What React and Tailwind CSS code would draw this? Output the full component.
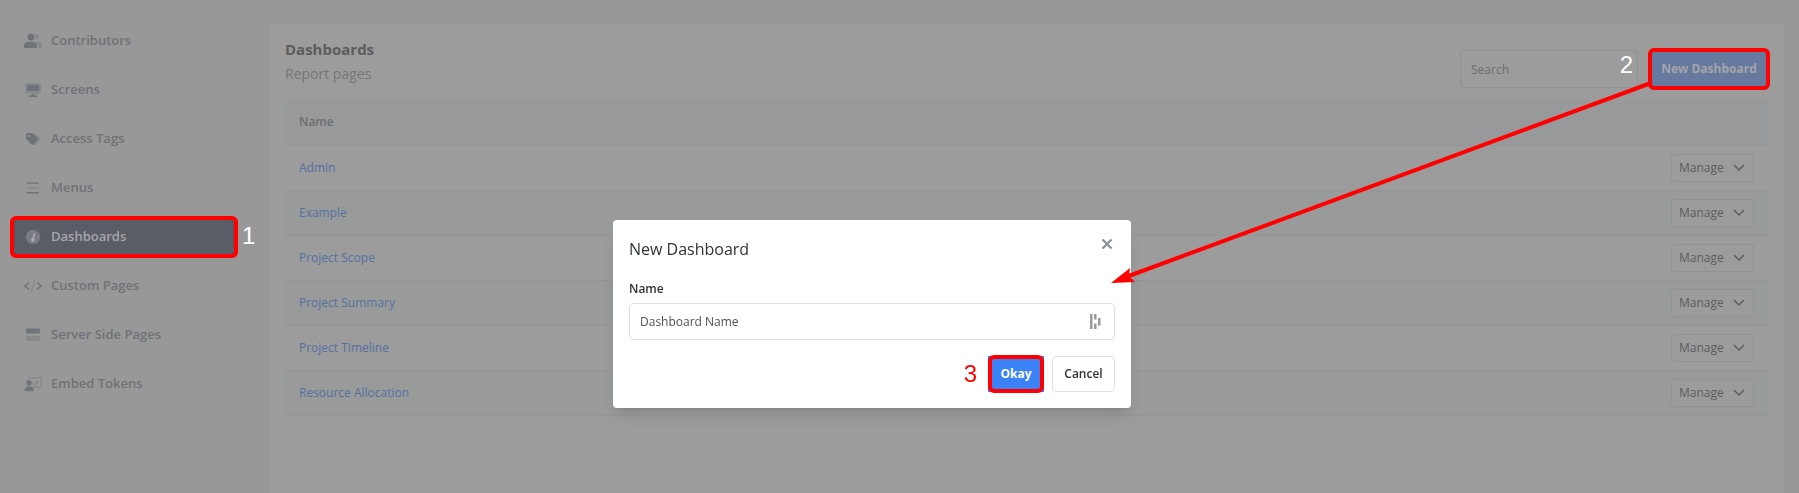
import React, { useState } from 'react'

const dashboards = ['Admin', 'Example', 'Project Scope', 'Project Summary', 'Project Timeline', 'Resource Allocation']

const icons = {
  contributors: (
    <>
      <g opacity="0.4">
        <path d="M11 1a3 3 0 0 1 2.5 0a3 3 0 0 1 -1 5.500a3 3 0 0 1 -1.500 -.2a4.500 4.500 0 0 0 0 -5.300z" />
        <path d="M13 8.500h1a4 4 0 0 1 4 4v1.500q0 1 -1 1h-3.300q.3 -.5 .3 -1.500a6 6 0 0 0 -2 -4.700z" />
      </g>
      <circle cx="7" cy="4" r="3.500" />
      <path d="M4 8.800h5a4 4 0 0 1 4 4v1.200q0 1 -1 1h-11q-1 0 -1 -1v-1.200a4 4 0 0 1 4 -4z" />
    </>
  ),
  screens: (
    <>
      <path opacity="0.4" fillRule="evenodd" d="M2.500 1h13a1.500 1.500 0 0 1 1.500 1.500v8a1.500 1.500 0 0 1 -1.500 1.500h-13a1.500 1.500 0 0 1 -1.500 -1.500v-8a1.500 1.500 0 0 1 1.500 -1.500zM3 3v6h12v-6z" />
      <path d="M3 3h12v6h-12zM8 12h2l.5 1.200h2q1 0 1 .9t-1 .9h-7q-1 0 -1 -.9t1 -.9h2z" />
    </>
  ),
  tags: (
    <>
      <path opacity="0.4" d="M10 2h1l5 5.200q1 1.200 0 2.300l-4.500 4.500q-.6 .4 -1.200 0l4.500 -4.700q.6 -.7 0 -1.400z" />
      <path fillRule="evenodd" d="M2 3.200q0 -1.200 1.200 -1.200h4.600q.7 0 1.200 .5l4.700 4.700q1 1.100 0 2.200l-4 4q-1.100 1 -2.200 0l-5 -4.800q-.5 -.5 -.5 -1.200zM5 4a1 1 0 1 0 0.010 0z" />
    </>
  ),
  menus: (
    <>
      <path d="M3 2.500h12v1.200h-12zM3 12h12v1.500h-12z" />
      <path opacity="0.4" d="M3 7.200h12v1.600h-12z" />
    </>
  ),
  dashboards: (
    <>
      <circle opacity="0.4" cx="9" cy="8" r="7.300" />
      <path d="M10.200 3.800l1.300 .4l-1.100 5.300a2 2 0 1 1 -2.200 -.6z" />
      <path opacity="0.5" d="M8 3.500a.8 .8 0 1 1 .01 0zM5 5.600a.8 .8 0 1 1 .01 0zM3.800 8.800a.8 .8 0 1 1 .01 0zM14.200 8.800a.8 .8 0 1 1 .01 0z" />
    </>
  ),
  custom: (
    <g fill="none" stroke="currentColor" strokeWidth="1.600">
      <path d="M5 4.500l-4 3.500l4 3.500M13 4.500l4 3.500l-4 3.500" />
      <path opacity="0.3" d="M11 1.500l-4 13" />
    </g>
  ),
  server: (
    <>
      <path fillRule="evenodd" d="M3 1.500h12q1 0 1 1v3q0 1 -1 1h-12q-1 0 -1 -1v-3q0 -1 1 -1zM11 3.500v1h1v-1zM13.500 3.500v1h1v-1z" />
      <path opacity="0.4" fillRule="evenodd" d="M3 9h12q1 0 1 1v3q0 1 -1 1h-12q-1 0 -1 -1v-3q0 -1 1 -1zM13.500 11v1h1v-1z" />
    </>
  ),
  embed: (
    <>
      <g opacity="0.4">
        <path fillRule="evenodd" d="M5 1h12q1 0 1 1v9q0 1 -1 1h-8l-1.500 -1.500h9v-8h-10.500v1h-1.500v-1.500q0 -1 .5 -1z" />
        <path d="M8.500 6l1.500 1.500l2.500 -1.500l-1 -1h3.500v3l-1 -1l-3.500 2.500l-2.300 -2z" />
      </g>
      <circle cx="5" cy="7" r="2.700" />
      <path d="M4 10.500h2a4 4 0 0 1 3.500 4q0 .8 -.8 .8h-7.400q-.8 0 -.8 -.8a4 4 0 0 1 3.500 -4z" />
    </>
  ),
}

const navItems = [
  { label: 'Contributors', icon: 'contributors' },
  { label: 'Screens', icon: 'screens' },
  { label: 'Access Tags', icon: 'tags' },
  { label: 'Menus', icon: 'menus' },
  { label: 'Dashboards', icon: 'dashboards', active: true },
  { label: 'Custom Pages', icon: 'custom' },
  { label: 'Server Side Pages', icon: 'server' },
  { label: 'Embed Tokens', icon: 'embed' },
]

// Red frame drawn around the control for each step
function Highlight({ className }) {
  return <span className={`absolute rounded-md border-4 border-[#ff0000] pointer-events-none ${className}`} />
}

function Sidebar() {
  return (
    <nav className="w-[268px] shrink-0 pl-3 pr-8 pt-[22px]">
      <ul className="flex flex-col gap-[11px]">
        {navItems.map((item) => (
          <li key={item.label} className="relative">
            <a
              href="#"
              className={`flex h-[38px] items-center gap-[9px] pl-3 text-[13px] font-semibold ${
                item.active ? 'bg-[#5a5c66] text-[#a5a6a9]' : 'text-[#6f7276]'
              }`}
            >
              <svg viewBox="0 0 18 16" className="h-4 w-[18px]" fill="currentColor">{icons[item.icon]}</svg>
              <span>{item.label}</span>
            </a>
            {item.active && (
              <>
                <Highlight className="-left-0.5 -right-0.5 -top-0.5 -bottom-0.5" />
                <span className="absolute left-full top-0 pl-1.5 font-['Liberation_Sans',sans-serif] text-2xl leading-9 text-white">1</span>
              </>
            )}
          </li>
        ))}
      </ul>
    </nav>
  )
}

function DashboardTable() {
  return (
    <table className="w-full text-xs">
      <thead>
        <tr className="h-[45px] border-b border-[#959595] bg-[#98999b]">
          <th className="pl-3.5 text-left font-semibold text-[#6d6e70]">Name</th>
          <th aria-label="Actions" />
        </tr>
      </thead>
      <tbody>
        {dashboards.map((name) => (
          <tr key={name} className="h-[45px] border-b border-[#959595] even:bg-[#999b9a]">
            <td className="pl-3.5"><a href="#" className="text-[#5470a0]">{name}</a></td>
            <td className="pr-3.5">
              <button className="ml-auto flex h-7 w-[83px] items-center justify-between rounded-[3px] border border-[#929293] bg-[#9c9c9c] pl-[7px] pr-2 text-xs font-medium text-[#5c5d60]">
                Manage
                <svg viewBox="0 0 12 8" className="h-2 w-3" fill="none" stroke="currentColor" strokeWidth="1.500">
                  <path d="M1 1l5 5l5 -5" />
                </svg>
              </button>
            </td>
          </tr>
        ))}
      </tbody>
    </table>
  )
}

function NewDashboardModal() {
  const [name, setName] = useState('Dashboard Name')

  return (
    <div className="fixed inset-0 flex items-start justify-center pt-[220px] pr-[55px]">
      <div role="dialog" aria-labelledby="modal-title" className="w-[518px] rounded bg-white p-4 text-xs text-[#2f3237] shadow-lg">
        <div className="flex items-start justify-between">
          <h2 id="modal-title" className="text-base font-medium leading-[26px]">New Dashboard</h2>
          <button aria-label="Close" className="p-0.5 text-[#8f939e]">
            <svg viewBox="0 0 12 12" className="h-3 w-3" fill="none" stroke="currentColor" strokeWidth="2.400">
              <path d="M1.500 1.500l9 9M10.500 1.500l-9 9" />
            </svg>
          </button>
        </div>
        <label htmlFor="dashboard-name" className="mt-[17px] block leading-5 font-semibold">Name</label>
        <div className="relative mt-1">
          <input
            id="dashboard-name"
            className="h-[37px] w-full rounded border border-[#dfdfe6] px-2.5 text-[#505256] outline-none"
            value={name}
            onChange={(e) => setName(e.target.value)}
          />
          <svg viewBox="0 0 11 15" className="absolute right-3.5 top-[11px] h-[15px] w-[11px]" fill="#9b9a98">
            <path d="M0 0h2.500v15h-2.500zM4 0h2.500v5.500h-2.500zM4 9.500h2.500v5.500h-2.500zM8 4h2.500v7.500h-2.500z" />
          </svg>
        </div>
        <div className="mt-4 flex justify-end gap-2">
          <div className="relative">
            <button className="h-9 w-14 bg-[#3b82f6] font-bold text-white">Okay</button>
            <Highlight className="inset-x-0 -bottom-px -top-px" />
            <span className="absolute right-full top-0 pr-[11px] font-['Liberation_Sans',sans-serif] text-2xl leading-9 text-[#ff0000]">3</span>
          </div>
          <button className="h-9 w-[63px] rounded border border-[#dfdfe6] font-semibold">Cancel</button>
        </div>
      </div>
    </div>
  )
}

export default function App() {
  return (
    <div className="relative flex min-h-screen bg-[#989898] font-['Open_Sans','Noto_Sans',sans-serif]">
      <Sidebar />

      <main className="mr-3.5 mt-[22px] flex-1 rounded-t border border-b-0 border-[#969696] bg-[#9c9c9c] px-4 pt-[13px]">
        <header className="flex items-start justify-between">
          <div>
            <h1 className="text-[15px] font-bold leading-[26px] text-[#5c5c5d]">Dashboards</h1>
            <p className="text-sm leading-6 text-[#777]">Report pages</p>
          </div>
          <div className="mb-3 mt-3.5 flex gap-3">
            <div className="relative">
              <input
                aria-label="Search"
                placeholder="Search"
                className="h-[38px] w-[178px] rounded border border-[#929293] px-2.5 text-xs placeholder:text-[#6e6e6e]"
              />
              <span className="absolute right-[5px] top-0 font-['Liberation_Sans',sans-serif] text-2xl leading-[30px] text-white">2</span>
            </div>
            <div className="relative">
              <button className="h-[38px] w-[118px] bg-[#66799f] text-xs font-bold text-[#a3a5aa]">New Dashboard</button>
              <Highlight className="-left-0.5 -right-0.5 -top-0.5 -bottom-0.5" />
            </div>
          </div>
        </header>
        <DashboardTable />
      </main>

      <NewDashboardModal />

      {/* Arrow from the New Dashboard button to the dialog */}
      <svg viewBox="0 0 1799 493" className="pointer-events-none absolute left-0 top-0 w-full" fill="#ff0000">
        <path d="M1651 83L1126 277" stroke="#ff0000" strokeWidth="4" />
        <path d="M1111 283L1130 268L1129 276L1135 282z" />
      </svg>
    </div>
  )
}
